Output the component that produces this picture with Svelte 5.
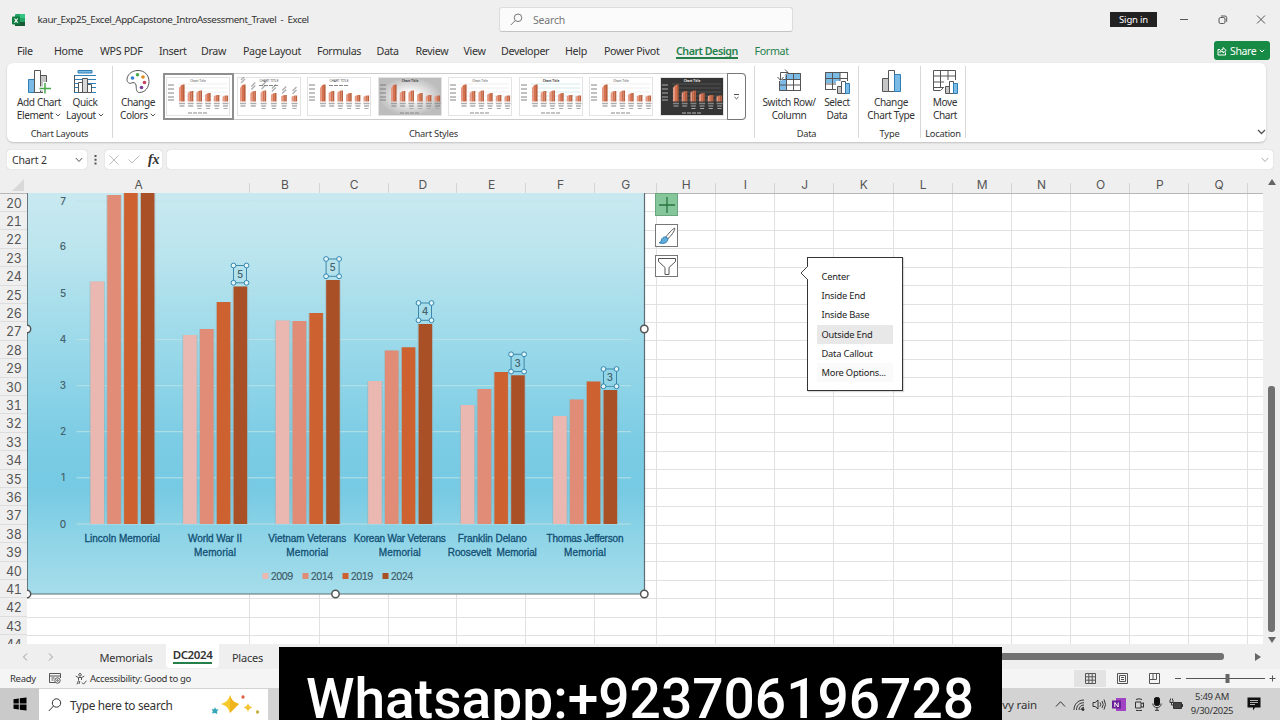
<script>
  const tabs = [
    { name: "File", width: 37 },
    { name: "Home", width: 46 },
    { name: "WPS PDF", width: 59 },
    { name: "Insert", width: 42 },
    { name: "Draw", width: 42 },
    { name: "Page Layout", width: 74 },
    { name: "Formulas", width: 59.5 },
    { name: "Data", width: 39 },
    { name: "Review", width: 48 },
    { name: "View", width: 37.5 },
    { name: "Developer", width: 64 },
    { name: "Help", width: 39 },
    { name: "Power Pivot", width: 72 },
    { name: "Chart Design", width: 78.5, green: true, active: true },
    { name: "Format", width: 40, green: true },
  ];

  const columns = [
    ["A", 223], ["B", 69.5], ["C", 69], ["D", 68.5], ["E", 69], ["F", 69],
    ["G", 61.5], ["H", 59], ["I", 59.5], ["J", 59], ["K", 59.5], ["L", 59],
    ["M", 59.3], ["N", 59.2], ["O", 59.2], ["P", 59.3], ["Q", 59],
  ];

  const rows = Array.from({ length: 25 }, (_, i) => 20 + i);

  const colors = ["#ebb8b1", "#e08c76", "#cd6130", "#aa5027"];
  const years = ["2009", "2014", "2019", "2024"];

  // x is the left edge of the first bar, tops are the bar tops
  const groups = [
    { x: 90.5, tops: [281.5, 195, 193, 193] },
    { x: 183.2, tops: [335, 329, 302, 286.5], label: "5" },
    { x: 275.8, tops: [320.5, 321, 313, 280], label: "5" },
    { x: 368.2, tops: [381, 350.5, 347.3, 324], label: "4" },
    { x: 460.8, tops: [405, 389, 372, 375.3], label: "3" },
    { x: 553.2, tops: [416, 399.5, 381.5, 390], label: "3" },
  ];

  const axis = [
    ["7", 201], ["6", 246.5], ["5", 293.5], ["4", 339.5],
    ["3", 385.7], ["2", 431.7], ["1", 477.8], ["0", 524],
  ];

  const categories = [
    { x: 122.3, lines: [["Lincoln Memorial", 75.5]] },
    { x: 215, lines: [["World War II", 54], ["Memorial", 42]] },
    { x: 307.3, lines: [["Vietnam Veterans", 78], ["Memorial", 42]] },
    { x: 399.8, lines: [["Korean War Veterans", 92], ["Memorial", 42]] },
    { x: 492.3, lines: [["Franklin Delano", 69], ["Roosevelt  Memorial", 89]] },
    { x: 585, lines: [["Thomas Jefferson", 77], ["Memorial", 42]] },
  ];

  const thumbs = [
    { kind: "plain" },
    { kind: "values" },
    { kind: "clean" },
    { kind: "grey" },
    { kind: "wide" },
    { kind: "teal" },
    { kind: "lined" },
    { kind: "dark" },
  ];
  const thumbBars = [17, 10.5, 11, 8.5, 6.5, 6];

  const options = [
    "Center",
    "Inside End",
    "Inside Base",
    "Outside End",
    "Data Callout",
    "More Options...",
  ];
</script>

{#snippet chevron()}
  <svg class="chev" width="6" height="4" viewBox="0 0 6 4"><path d="M.8.8 3 3 5.2.8" /></svg>
{/snippet}

{#snippet bars()}
  <path d="M3.5 9.5h6v13h-6z" fill="#c6c6c6" />
  <path d="M9.5 1.5h6v21h-6z" fill="#fff" />
  <path d="M15.5 5.5h6v17h-6z" fill="#7cbbe6" stroke="#2f7fb5" />
{/snippet}

<div class="window">
  <header class="titlebar">
    <svg class="logo" width="14" height="14" viewBox="0 0 14 14">
      <rect x="3" y="1" width="10" height="12" rx="1" fill="#21a366" />
      <path d="M8 1h5v4H8z" fill="#33c481" />
      <path d="M3 9h10v4H3z" fill="#185c37" />
      <rect x="0" y="3.5" width="8" height="8" rx="1" fill="#107c41" />
      <path d="M2.5 5.500 5.700 9.700M5.700 5.500 2.500 9.700" stroke="#fff" stroke-width="1.1" />
    </svg>
    <span class="filename">kaur_Exp25_Excel_AppCapstone_IntroAssessment_Travel&nbsp; -&nbsp; Excel</span>
    <div class="search">
      <svg width="13" height="13" viewBox="0 0 13 13"><circle cx="8" cy="4.8" r="3.8" /><path d="M5.3 7.5.8 12" /></svg>
      <span>Search</span>
    </div>
    <div class="spacer"></div>
    <div class="signin">Sign in</div>
    <div class="controls">
      <svg width="10" height="10" viewBox="0 0 10 10"><path d="M1 4.500h8" /></svg>
      <svg width="10" height="10" viewBox="0 0 10 10"><rect x="1" y="2.5" width="6" height="6" rx="1.5" /><path d="M3 1h4q1.700 0 1.700 1.700v4" /></svg>
      <svg width="10" height="10" viewBox="0 0 10 10"><path d="m1 .5 8 8M9 .5l-8 8" /></svg>
    </div>
  </header>

  <nav class="tabs">
    {#each tabs as tab}
      <div class="tab" class:green={tab.green} class:active={tab.active} style={`width: ${tab.width}px`}>
        <span>{tab.name}</span>
      </div>
    {/each}
    <div class="share">
      <svg width="10" height="10" viewBox="0 0 10 10"><path d="M3 3.500H1v5.500h7.500V6.500M2.800 6.500C3 4.500 4 3.500 6 3.500V1.500L9.200 4.500 6 7V5.200C4.600 5.200 3.600 5.600 2.800 6.500z" /></svg>
      <span>Share</span>
      {@render chevron()}
    </div>
  </nav>

  <section class="ribbon">
    <div class="group layouts">
      <div class="tools">
        <div class="tool w46">
          <svg width="24" height="25" viewBox="0 0 24 25">
            <path d="M1.500 10.500h6v13h-6z" fill="#7cbbe6" stroke="#2f7fb5" />
            <path d="M13.500 6.500h6v17h-6z" fill="#c6c6c6" />
            <path d="M7.500 1.500h6v22h-6z" fill="#fff" />
            <path d="M18 13v12M12 19.500h12" stroke="#fff" stroke-width="4" />
            <path d="M18 14v10.500M12.500 19.500H24" stroke="#4aa84e" stroke-width="1.5" />
          </svg>
          <span>Add Chart<br />Element {@render chevron()}</span>
        </div>
        <div class="tool w46">
          <svg width="24" height="25" viewBox="0 0 24 25">
            <path d="M5 1.500h14v2.500H5z" fill="#7cbbe6" stroke="#2f7fb5" />
            <path d="M1 6.500h22M1 10.500h22M1 14.500h22M1 18.500h22M1 23.500h22" stroke="#2f7fb5" />
            <path d="M1.500 6.500v17" />
            <path d="M5.500 13.500h4v10h-4z" fill="#fff" />
            <path d="M9.500 9.500h5v14h-5z" fill="#d8d8d8" />
            <path d="M14.500 15.500h4v8h-4z" fill="#fff" />
          </svg>
          <span>Quick<br />Layout {@render chevron()}</span>
        </div>
      </div>
      <div class="caption">Chart Layouts</div>
    </div>

    <div class="group styles">
      <div class="tools">
        <div class="tool w50">
          <svg width="24" height="25" viewBox="0 0 24 25">
            <path d="M12 1.500C5.500 1.500 1 6 1 10.500c0 3 2.500 4.500 4.500 3.500 2-.8 4-.5 4.500 2 .5 2.300-.3 7.500 3.500 7.500 5.500 0 9.500-5 9.500-11 0-6.500-4.500-11-11-11z" fill="#fff" />
            <g stroke="none">
              <circle cx="6.5" cy="9" r="1.8" fill="#2f7fd0" />
              <circle cx="11.5" cy="5.8" r="1.8" fill="#4aa84e" />
              <circle cx="17" cy="8" r="1.8" fill="#e08a1e" />
              <circle cx="18.5" cy="13.5" r="1.8" fill="#c8405a" />
              <circle cx="15.5" cy="18.5" r="1.8" fill="#7d3f98" />
            </g>
          </svg>
          <span>Change<br />Colors {@render chevron()}</span>
        </div>
        <div class="gallery">
          {#each thumbs as thumb, t}
            <div class="thumb" class:selected={t === 0}>
              <svg class={thumb.kind} width="64" height="39" viewBox="0 0 64 39">
                <defs>
                  <radialGradient id="shade"><stop offset="0.2" stop-color="#fff" /><stop offset="1" stop-color="#bdbdbd" /></radialGradient>
                </defs>
                <rect class="paper" x=".5" y=".5" width="63" height="38" />
                {#each [7, 11, 15, 19, 23] as y}
                  <path class="rule" d={`M12 ${y}H61`} />
                {/each}
                <text class="title" x="32" y="5">{thumb.kind === "values" || thumb.kind === "clean" ? "CHART TITLE" : "Chart Title"}</text>
                {#if thumb.kind !== "values"}
                  <path class="tick" d="M2 8h6M2 12h6M2 16h6M2 20h6M2 23h6" />
                {/if}
                {#each thumbBars as height, i}
                  {@const x = (thumb.kind === "values" ? 3 : 13) + i * (thumb.kind === "values" ? 10.3 : 8.7)}
                  <path fill="#e59a84" d={`M${x} 24.500v${-height * 0.8}l2-${height * 0.15}V24.500z`} />
                  <path fill="#d5714f" d={`M${x + 2} 24.500v${-height * 0.95}l2-${height * 0.05}V24.500z`} />
                  <path fill="#b9603e" d={`M${x + 4} 24.500v${-height}h1.600V24.500z`} />
                  {#if thumb.kind === "values"}
                    <path class="tick" d={`M${x + 1} ${23 - height}l4-4M${x + 1} ${20 - height}l4-4`} />
                  {/if}
                  <path class="tick" d={`M${x} 26.500h6M${x + 0.5} 29h5`} />
                  {#if i > 1}<path class="faint" d={`M${x + 1} 31.500h4`} />{/if}
                {/each}
                <path class="legend" d={thumb.kind === "values" || thumb.kind === "clean" ? "M22 8.500h20" : "M22 36h20"} />
              </svg>
            </div>
          {/each}
          <div class="more">
            <svg width="7" height="7" viewBox="0 0 7 7"><path d="M1 1.500h5M1.500 4 3.500 5.800 5.500 4" /></svg>
          </div>
        </div>
      </div>
      <div class="caption">Chart Styles</div>
    </div>

    <div class="group data">
      <div class="tools">
        <div class="tool w58">
          <svg width="26" height="25" viewBox="0 0 26 25">
            <path d="M3.500 4.500h21v17h-21z" fill="#fff" />
            <path d="M9 5h15v5H9zM4 10h6v11H4z" fill="#7cbbe6" stroke="none" />
            <path d="M3.500 21.500h21v-17h-21zM3.500 10.500h21M3.500 16h21M10.500 4.500v17M17.500 4.500v17" />
            <path d="M0 0h12v4L5 12H0z" fill="#fff" stroke="none" />
            <path d="M4.500 11V3.500H12M1.500 8l3 3.300 3-3.300M9 .5l3 3-3 3" />
          </svg>
          <span>Switch Row/<br />Column</span>
        </div>
        <div class="tool w38">
          <svg width="26" height="25" viewBox="0 0 26 25">
            <path d="M1.500 3.500h22v17h-22z" fill="#fff" />
            <path d="M2 4h14v10H2z" fill="#7cbbe6" stroke="none" />
            <path d="M1.500 20.500h22v-17h-22zM1.500 9.500h22M1.500 15h22M8.500 3.500v17M16 3.500v17" />
            <path d="M12 12h14v13H12z" fill="#fff" stroke="none" />
            <path d="M13.500 17.500h4v7h-4z" fill="#c6c6c6" /><path d="M17.500 12.500h4v12h-4z" fill="#fff" />
            <path d="M21.500 14.500h4v10h-4z" fill="#7cbbe6" stroke="#2f7fb5" />
          </svg>
          <span>Select<br />Data</span>
        </div>
      </div>
      <div class="caption">Data</div>
    </div>

    <div class="group type">
      <div class="tools">
        <div class="tool w58">
          <svg width="25" height="25" viewBox="0 0 25 25">{@render bars()}</svg>
          <span>Change<br />Chart Type</span>
        </div>
      </div>
      <div class="caption">Type</div>
    </div>

    <div class="group location">
      <div class="tools">
        <div class="tool w46">
          <svg width="26" height="25" viewBox="0 0 26 25">
            <path d="M1.500 1.500h22v17h-12l-3 3h-7zM1.500 7h22M1.500 13h22M1.500 18.500h10M8.500 1.500v17M16 1.500v17" fill="#fff" />
            <path d="M12 11h14v14H12z" fill="#fff" stroke="none" />
            <path d="M13.500 17.500h4v7h-4z" fill="#c6c6c6" /><path d="M17.500 12.500h4v12h-4z" fill="#fff" />
            <path d="M21.500 14.500h4v10h-4z" fill="#7cbbe6" stroke="#2f7fb5" />
          </svg>
          <span>Move<br />Chart</span>
        </div>
      </div>
      <div class="caption">Location</div>
    </div>
    <svg class="collapse" width="9" height="6" viewBox="0 0 9 6"><path d="m1 1 3.500 3.500L8 1" /></svg>
  </section>

  <section class="formula">
    <div class="namebox">
      <span>Chart 2</span>
      <svg width="8" height="6" viewBox="0 0 8 6"><path d="m.8 1 3.200 3.500L7.200 1" /></svg>
    </div>
    <svg class="dots" width="3" height="10" viewBox="0 0 3 10"><path d="M.5 0h2v2h-2zM.5 3.700h2v2h-2zM.5 7.400h2v2h-2z" /></svg>
    <div class="entry">
      <svg width="10" height="10" viewBox="0 0 10 10"><path d="m.5.5 9 9M9.500.5l-9 9" /></svg>
      <svg width="12" height="9" viewBox="0 0 12 9"><path d="M.5 4.500 4 8 11.500.5" /></svg>
      <i>fx</i>
    </div>
    <div class="input">
      <svg width="8" height="6" viewBox="0 0 8 6"><path d="m.8 1 3.200 3.500L7.200 1" /></svg>
    </div>
  </section>

  <main class="sheet">
    <div class="colhead">
      <div class="corner"><svg width="12" height="12" viewBox="0 0 12 12"><path d="M12 0v12H0z" /></svg></div>
      {#each columns as [name, width]}
        <div class="col" style={`width: ${width}px`}>{name}</div>
      {/each}
    </div>
    <div class="grid">
      <div class="rowhead">
        {#each rows as row}
          <div class="row">{row}</div>
        {/each}
      </div>
      <div class="cells">
        {#each columns as [, width]}
          <div class="cellcol" style={`width: ${width}px`}></div>
        {/each}
      </div>
    </div>

    <svg class="chart" width="622" height="407" viewBox="27 193 622 407">
      <defs>
        <linearGradient id="sky" x1="0" y1="0" x2="0" y2="1">
          <stop offset="0" stop-color="#c9e9f0" />
          <stop offset="0.14" stop-color="#bce5ee" />
          <stop offset="0.36" stop-color="#9ddaea" />
          <stop offset="0.62" stop-color="#7bcce4" />
          <stop offset="0.74" stop-color="#76cae3" />
          <stop offset="0.86" stop-color="#8ed4e7" />
          <stop offset="1" stop-color="#a6ddeb" />
        </linearGradient>
      </defs>
      <rect x="27" y="193" width="617.5" height="401" fill="url(#sky)" />
      {#each axis as [value, y]}
        <path class="gridline" class:dim={y < 320} d={`M76.500 ${y}H631`} />
        <text class="value" x="63" y={y + 3.5}>{value}</text>
      {/each}
      {#each groups as group}
        {#each group.tops as top, i}
          <rect x={group.x + i * 16.8 - 1} y={top} width="15.5" height={524 - top} fill="#9ba9aa" opacity="0.45" />
          <rect x={group.x + i * 16.8} y={top} width="13.5" height={524 - top} fill={colors[i]} />
        {/each}
        {#if group.label}
          {@const left = group.x + 50.3}
          {@const top = group.tops[3] - 21}
          <rect class="frame" x={left} y={top} width="13" height="17.3" />
          <text class="point" x={left + 6.5} y={top + 12.2}>{group.label}</text>
          {#each [[0, 0], [13, 0], [0, 17.3], [13, 17.3]] as [dx, dy]}
            <circle class="handle" cx={left + dx} cy={top + dy} r="2.4" />
          {/each}
        {/if}
      {/each}
      {#each categories as category}
        {#each category.lines as [text, width], i}
          <text class="category" x={category.x} y={542 + i * 13.7} textLength={width}>{text}</text>
        {/each}
      {/each}
      {#each years as year, i}
        <rect x={262.5 + i * 40} y="573" width="6" height="6" fill={colors[i]} />
        <text class="year" x={270.5 + i * 40} y="579.5" textLength="23">{year}</text>
      {/each}
      <path class="edge" d="M27 594H644.500V193M27.300 193V594" />
      <g class="grip">
        <circle cx="27" cy="329" r="3.7" /><circle cx="644.3" cy="329" r="3.7" />
        <circle cx="27" cy="594" r="3.7" /><circle cx="335.5" cy="594" r="3.7" /><circle cx="644.3" cy="594" r="3.7" />
      </g>
    </svg>

    <div class="flyouts">
      <div class="fly plus"><svg width="22" height="22" viewBox="0 0 22 22"><path d="M11 3v16M3 11h16" stroke="#28763f" stroke-width="1.3" /></svg></div>
      <div class="fly">
        <svg width="22" height="22" viewBox="0 0 22 22">
          <path d="M18.800 3.200c-2 .5-7 6-8.800 8.600l1.900 1.900C14.500 11.500 19 6 18.800 3.200z" fill="#fff" stroke="#555" />
          <path d="M10 12c-2.500-.3-4 .8-4.500 3-.3 1.500-1.200 2.300-2.500 2.700 3.500 1.500 8.500.8 9-3.800z" fill="#62acd9" stroke="#2f7fb5" />
        </svg>
      </div>
      <div class="fly"><svg width="22" height="22" viewBox="0 0 22 22"><path d="M2.500 3.500h17v3l-6.500 6v7H9v-7l-6.500-6z" fill="#fff" stroke="#555" /></svg></div>
    </div>

    <div class="menu">
      <svg class="beak" width="8" height="14" viewBox="0 0 8 14"><path d="M8 0 1 7l7 7" /></svg>
      {#each options as option}
        <div class="option" class:hover={option === "Outside End"} class:last={option === "More Options..."}>{option}</div>
      {/each}
    </div>

    <div class="vscroll">
      <svg width="8" height="6" viewBox="0 0 8 6"><path d="M4 0 8 6H0z" /></svg>
      <div class="thumbv"></div>
      <svg width="8" height="6" viewBox="0 0 8 6"><path d="M0 0h8L4 6z" /></svg>
    </div>
  </main>

  <section class="sheets">
    <svg width="6" height="8" viewBox="0 0 6 8"><path d="M5 .5 1.500 4 5 7.500" /></svg>
    <svg class="next" width="6" height="8" viewBox="0 0 6 8"><path d="M1 .5 4.500 4 1 7.500" /></svg>
    <div class="sheettab first">Memorials</div>
    <div class="sheettab current"><span>DC2024</span></div>
    <div class="sheettab places">Places</div>
    <div class="hscroll"></div>
    <svg class="right" width="6" height="8" viewBox="0 0 6 8"><path d="M0 0 6 4 0 8z" /></svg>
  </section>

  <footer class="status">
    <span class="ready">Ready</span>
    <svg class="macro" width="12" height="11" viewBox="0 0 12 11"><path d="M6 9.500H.5v-9h11V5M.5 3h11M2.500 5h3M2.500 7h2" /><circle cx="8.5" cy="7.5" r="2.7" /><circle cx="8.5" cy="7.5" r=".8" /></svg>
    <svg class="access" width="12" height="12" viewBox="0 0 12 12"><circle cx="5" cy="1.8" r="1.3" /><path d="M.8 3.200 3.500 4.500v3L2 11.300M9.300 3.200 6.500 4.500v2.500M3.500 4.500h3M4.800 8 4 11M7 9.500l1.500 1.700 3-3.500" /></svg>
    <span class="good">Accessibility: Good to go</span>
    <div class="spacer"></div>
    <div class="view on"><svg width="11" height="11" viewBox="0 0 11 11"><path d="M.5.5h10v10H.5zM3.800.5v10M7.200.5v10M.5 3.800h10M.5 7.200h10" /></svg></div>
    <div class="view"><svg width="11" height="11" viewBox="0 0 11 11"><path d="M.5.5h10v10H.5zM2.500 2.500h6v6h-6zM4 4.500h3M4 6.500h3" /></svg></div>
    <div class="view"><svg width="11" height="11" viewBox="0 0 11 11"><path d="M.5.5h10v10H.5zM.5 6.500h7v-6M4 .5v6" /></svg></div>
    <svg class="zoom" width="104" height="11" viewBox="0 0 104 11">
      <path d="M2 5.500h6M96.500 5.500h6M99.500 2.500v6" />
      <path class="track" d="M13 5.500h79" />
      <path class="knob" d="M52.500 1h4v9h-4z" />
    </svg>
  </footer>

  <footer class="taskbar">
    <div class="start"><svg width="14" height="14" viewBox="0 0 14 14"><path d="M.5 2.300 5.800 1.500v5H.5zM6.800 1.300 13.500.4v6.100H6.800zM.5 7.500h5.300v5L.5 11.700zM6.800 7.500h6.700v6.100l-6.700-.9z" /></svg></div>
    <div class="find">
      <svg class="lens" width="14" height="14" viewBox="0 0 14 14"><circle cx="8.5" cy="5" r="4.2" /><path d="M5.500 8 .8 13" /></svg>
      <span>Type here to search</span>
      <svg class="sparkles" width="50" height="21" viewBox="0 0 50 21">
        <path d="M19 1c1.500 5 3.500 7.200 9 9-5.500 1.700-7.500 4-9 9-1.500-5-3.500-7.300-9-9 5.500-1.800 7.500-4 9-9z" fill="#f6c92d" />
        <path d="M19 1c1.500 5 3.500 7.200 9 9L19 19z" fill="#f1b51c" />
        <path d="M37 9c.8 2.500 1.800 3.700 4.500 4.500-2.700.8-3.700 2-4.500 4.500-.8-2.500-1.800-3.700-4.500-4.500C35.200 12.700 36.200 11.500 37 9z" fill="#f3c535" />
        <path d="m4 13 1 2.300 2.500.3L6 17.500l.3 2.500-2.500-1L1 19.500l.8-2.300L.8 15l2.300.2z" fill="#35a6b8" />
        <circle cx="32" cy="3" r="1.7" fill="#df6449" /><circle cx="46.5" cy="18" r="1.7" fill="#c9b13b" />
      </svg>
    </div>
    <div class="spacer"></div>
    <span class="weather">Heavy rain</span>
    <div class="tray">
      <svg width="11" height="13" viewBox="0 0 11 13"><path d="m1 8.500 4.500-4.800L10 8.500" /></svg>
      <svg width="12" height="13" viewBox="0 0 12 13"><path d="M1 12C1 6 5 2 11 2M3.500 12C3.500 7.500 6.500 4.700 11 4.700M6 12c0-3 2-5 5-5M8 12c0-1.500 1-2.700 3-2.700" /><circle cx="10" cy="11.5" r="1" fill="#222" /></svg>
      <svg width="14" height="13" viewBox="0 0 14 13"><path d="M1 4.500h2.200L6 2v9L3.200 8.500H1zM8 4.500q1.500 2 0 4M10 3q2.500 3.500 0 7M12 1.500q3 5 0 10" /></svg>
      <svg width="14" height="13" viewBox="0 0 14 13"><path d="M4 0h10v13H4z" fill="#a044c4" stroke="none" /><path d="M0 2.500h9v8H0z" fill="#6b1f96" stroke="none" /><path class="mark" d="M2.800 9V4.500L6.200 9V4.500" /></svg>
      <svg width="12" height="13" viewBox="0 0 12 13"><path d="M2.500 4h5.500v6H2.500zM8 6l2.500-1.200v4.500L8 8.500M3 1.500q3-1.500 6 0M3 12.300q3 .8 6 0" /></svg>
      <svg width="10" height="14" viewBox="0 0 10 14"><rect x="2.5" y=".5" width="5" height="8" rx="1.8" fill="#111" stroke="#111" /><path d="M.8 6.500C.8 12 9.200 12 9.200 6.500M5 10.800v2.500M3 13.300h4" /></svg>
      <svg width="14" height="12" viewBox="0 0 14 12"><path d="M4.500 4.500h8v6h-8z" fill="#444" /><path d="M13.500 6v3M1 2v2.500h3V2M2.500 4.500V7h2M1.500.5v1.500M3.500.5v1.500" /></svg>
    </div>
    <div class="clock"><span>5:49 AM</span><span>9/30/2025</span></div>
    <svg class="notice" width="14" height="14" viewBox="0 0 14 14"><path d="M.5.5h13v10H8L6 13.500v-3H.5z" /><path d="M3 3.500h8M3 5.500h8M3 7.500h5" stroke="#ddd" stroke-width=".8" /></svg>
  </footer>

  <div class="banner">Whatsapp:+923706196728</div>
</div>

<style>
  :global(body) {
    margin: 0;
    overflow: hidden;
    background: #efefef;
  }

  .window {
    position: relative;
    display: flex;
    flex-direction: column;
    width: 1280px;
    height: 720px;
    overflow: hidden;
    background: #efefef;
    color: #333;
    font-family: "Noto Sans", "Open Sans", sans-serif;
    font-size: 11px;
    letter-spacing: -0.2px;
    white-space: nowrap;
  }

  svg {
    display: block;
    flex: none;
    fill: none;
    stroke: #555;
    stroke-width: 1;
  }

  .spacer {
    flex: 1;
  }

  .titlebar {
    display: flex;
    align-items: center;
    height: 39px;
    flex: none;
    padding-left: 12px;
    box-sizing: border-box;
  }

  .logo {
    stroke: none;
  }

  .filename {
    width: 461.5px;
    margin-left: 11.5px;
    font-size: 9.8px;
    letter-spacing: -0.42px;
  }

  .search {
    display: flex;
    align-items: center;
    gap: 10px;
    width: 294px;
    height: 25px;
    padding-left: 10px;
    box-sizing: border-box;
    background: #fbfbfb;
    border: 1px solid #dcdcdc;
    border-bottom-color: #c4c4c4;
    border-radius: 3px;
    color: #777;
    font-size: 10.5px;
  }

  .search svg {
    stroke: #777;
  }

  .signin {
    width: 47px;
    height: 15px;
    margin-right: 22px;
    background: #222;
    color: #fff;
    font-size: 9.5px;
    line-height: 16px;
    text-align: center;
  }

  .controls {
    display: flex;
    gap: 28.5px;
    margin-right: 14px;
  }

  .tabs {
    display: flex;
    height: 24px;
    flex: none;
    padding-left: 17px;
    font-size: 10.7px;
    letter-spacing: -0.35px;
  }

  .tab {
    flex: none;
    height: 21px;
    line-height: 24.5px;
  }

  .tab span {
    display: inline-block;
    height: 18px;
  }

  .green {
    color: #257f4b;
  }

  .active {
    font-weight: 600;
    letter-spacing: -0.48px;
  }

  .active span {
    border-bottom: 2px solid #257f4b;
  }

  .share {
    display: flex;
    align-items: center;
    gap: 3px;
    width: 56px;
    height: 19px;
    margin-top: 2px;
    margin-left: auto;
    margin-right: 10px;
    padding-left: 3px;
    box-sizing: border-box;
    background: #178a45;
    border-radius: 3px;
    color: #fff;
    font-size: 10.5px;
  }

  .share svg {
    stroke: #fff;
  }

  .ribbon {
    display: flex;
    width: 1259px;
    height: 79px;
    margin-left: 7px;
    flex: none;
    background: #fff;
    border-radius: 6px;
    box-shadow: 0 1px 2px rgba(0, 0, 0, 0.2);
  }

  .group {
    display: flex;
    flex-direction: column;
    height: 72px;
    margin-top: 3px;
    box-sizing: border-box;
    border-right: 1px solid #d8d8d8;
  }

  .layouts {
    width: 106px;
  }

  .styles {
    width: 642px;
  }

  .data {
    width: 104px;
  }

  .type {
    width: 62px;
  }

  .location {
    width: 45px;
  }

  .tools {
    display: flex;
    flex: none;
    height: 61px;
  }

  .layouts .tools {
    padding-left: 9px;
  }

  .data .tools {
    padding-left: 5px;
  }

  .type .tools {
    padding-left: 3px;
  }

  .location .tools {
    padding-left: 1px;
  }

  .tool {
    display: flex;
    flex: none;
    flex-direction: column;
    align-items: center;
    padding-top: 3px;
    font-size: 10.1px;
    line-height: 13px;
    letter-spacing: -0.38px;
    text-align: center;
  }

  .tool > span {
    margin-top: 2px;
  }

  .w38 {
    width: 38px;
  }

  .w46 {
    width: 46px;
  }

  .w50 {
    width: 50px;
  }

  .w58 {
    width: 58px;
  }

  .chev {
    display: inline-block;
    vertical-align: 2px;
  }

  .caption {
    flex: none;
    font-size: 9.3px;
    line-height: 14px;
    letter-spacing: -0.22px;
    text-align: center;
  }

  .gallery {
    display: flex;
    width: 583px;
    height: 47px;
    margin-top: 6.5px;
    box-sizing: border-box;
    border: 1px solid #ccc;
    border-radius: 3px;
  }

  .thumb {
    flex: none;
    width: 70.5px;
    height: 47px;
    margin: -1px 0 0 -1px;
    padding: 4px 3px;
    box-sizing: border-box;
  }

  .thumb + .thumb {
    margin-left: 0;
  }

  .selected {
    border: 2px solid #8f8f8f;
    padding: 2px 1px;
  }

  .thumb svg {
    stroke: none;
  }

  .paper {
    fill: #fff;
    stroke: #e3e3e3;
  }

  .grey .paper {
    fill: url(#shade);
  }

  .dark .paper {
    fill: #353535;
  }

  .rule {
    stroke: #e4e4e4;
    stroke-width: 0.6;
  }

  .teal .rule {
    stroke: #b9dede;
  }

  .dark .rule {
    stroke: #666;
  }

  .clean .rule,
  .values .rule,
  .grey .rule {
    stroke: none;
  }

  .title {
    fill: #444;
    font-size: 3.2px;
    letter-spacing: 0;
    text-anchor: middle;
  }

  .grey .title,
  .teal .title,
  .dark .title {
    font-weight: 700;
  }

  .tick {
    stroke: #777;
    stroke-width: 1.3;
    opacity: 0.6;
  }

  .faint {
    stroke: #aaa;
    stroke-width: 1;
  }

  .legend {
    stroke: #888;
    stroke-width: 1;
    stroke-dasharray: 4 1;
  }

  .dark .tick,
  .dark .legend {
    stroke: #bbb;
  }

  .dark .title {
    fill: #eee;
  }

  .more {
    display: flex;
    align-items: center;
    justify-content: center;
    width: 20px;
    height: 47px;
    margin: -1px -1px 0 auto;
    box-sizing: border-box;
    border: 1px solid #777;
    border-radius: 0 4px 4px 0;
  }

  .collapse {
    margin: 66px 0 0 auto;
    stroke-width: 1.3;
  }

  .formula {
    display: flex;
    align-items: center;
    height: 19px;
    margin-top: 8px;
    padding-left: 7px;
    flex: none;
  }

  .namebox,
  .entry,
  .input {
    display: flex;
    align-items: center;
    height: 19px;
    box-sizing: border-box;
    background: #fff;
    border-radius: 3px;
    box-shadow: 0 0 1px rgba(0, 0, 0, 0.3);
  }

  .namebox {
    justify-content: space-between;
    width: 80px;
    padding: 0 4px 0 5px;
    font-size: 10.5px;
    letter-spacing: -0.15px;
  }

  .dots {
    margin: 0 8px 0 7px;
    fill: #555;
    stroke: none;
  }

  .entry {
    width: 57px;
    gap: 9px;
    padding-left: 4px;
  }

  .entry svg {
    stroke: #bbb;
  }

  .entry i {
    margin-left: -1px;
    font-family: "Liberation Serif", serif;
    font-size: 14px;
    font-weight: bold;
  }

  .input {
    justify-content: flex-end;
    width: 1106px;
    margin-left: 5px;
    padding-right: 4px;
  }

  .input svg {
    stroke: #aaa;
  }

  .sheet {
    position: relative;
    height: 475px;
    flex: none;
  }

  .colhead {
    display: flex;
    width: 1263px;
    height: 24.5px;
    box-sizing: border-box;
    border-bottom: 1px solid #b7b7b7;
    font-family: Inter, "Liberation Sans", sans-serif;
    font-size: 12px;
    color: #555;
  }

  .corner {
    width: 27px;
    flex: none;
    padding: 10px 0 0 12px;
    box-sizing: border-box;
  }

  .corner svg {
    fill: #d9d9d9;
    stroke: none;
  }

  .col {
    flex: none;
    line-height: 31px;
    text-align: center;
    box-sizing: border-box;
    background: linear-gradient(#d4d4d4, #d4d4d4) right bottom / 1px 10px no-repeat;
  }

  .grid {
    display: flex;
    width: 1263px;
    height: 450.5px;
    overflow: hidden;
  }

  .rowhead {
    width: 27px;
    flex: none;
    font-family: Inter, "Liberation Sans", sans-serif;
    font-size: 12.5px;
    font-variant-numeric: tabular-nums;
    letter-spacing: -0.4px;
    color: #555;
  }

  .row {
    height: 18.42px;
    padding-right: 5.5px;
    box-sizing: border-box;
    border-bottom: 1px solid #ddd;
    line-height: 20.5px;
    text-align: right;
  }

  .cells {
    display: flex;
    flex: 1;
    background: repeating-linear-gradient(#fff 0 17.42px, #e1e1e1 17.42px 18.42px);
  }

  .cellcol {
    flex: none;
    box-sizing: border-box;
    border-right: 1px solid #e1e1e1;
  }

  .chart {
    position: absolute;
    top: 24px;
    left: 27px;
    stroke: none;
    font-family: Inter, "Liberation Sans", sans-serif;
    letter-spacing: 0;
  }

  .gridline {
    stroke: #b9e0e4;
    stroke-width: 1;
  }

  .dim {
    opacity: 0.5;
  }

  .value,
  .point {
    fill: #45636c;
    font-size: 10px;
    font-weight: 500;
    text-anchor: middle;
  }

  .frame {
    stroke: #3f87a8;
  }

  .handle {
    fill: #e4f5fa;
    stroke: #2f86b0;
  }

  .category {
    fill: #124f73;
    font-family: "Liberation Sans", sans-serif;
    font-size: 10px;
    stroke: #124f73;
    stroke-width: 0.3;
    text-anchor: middle;
    white-space: pre;
  }

  .year {
    fill: #45636c;
    font-size: 10px;
    font-weight: 500;
    font-variant-numeric: tabular-nums;
  }

  .edge {
    stroke: #5c6e73;
    stroke-width: 1.2;
  }

  .grip {
    fill: #fff;
    stroke: #555;
    stroke-width: 1.5;
  }

  .flyouts {
    position: absolute;
    top: 24px;
    left: 655px;
    display: flex;
    flex-direction: column;
    gap: 8px;
  }

  .fly {
    width: 23px;
    height: 22.5px;
    box-sizing: border-box;
    background: #fff;
    border: 1px solid #777;
  }

  .fly svg {
    margin: -0.5px;
  }

  .plus {
    background: #86c69b;
    border-color: #6aa57d;
    margin-bottom: 0.5px;
  }

  .menu {
    position: absolute;
    top: 87.5px;
    left: 807px;
    width: 95.5px;
    height: 134px;
    padding: 9.5px 9px;
    box-sizing: border-box;
    background: #fff;
    border: 1px solid #333;
    box-shadow: 1px 1px 1px rgba(0, 0, 0, 0.15);
    font-size: 9.3px;
    letter-spacing: -0.2px;
  }

  .beak {
    position: absolute;
    top: 8px;
    left: -8px;
    fill: #fff;
    stroke: #444;
  }

  .option {
    height: 19.2px;
    padding-left: 4.5px;
    line-height: 19.6px;
    color: #222;
  }

  .hover {
    background: #e8e8e8;
  }

  .last {
    background: #fafafa;
  }

  .vscroll {
    position: absolute;
    top: 10px;
    right: 4px;
    display: flex;
    flex-direction: column;
    align-items: center;
    width: 9px;
    height: 464px;
  }

  .vscroll svg,
  .right {
    fill: #666;
    stroke: none;
  }

  .thumbv {
    width: 7px;
    height: 247px;
    margin: 201px 0 5px;
    background: #717171;
    border-radius: 3px;
  }

  .sheets {
    display: flex;
    align-items: center;
    height: 25px;
    padding-left: 22px;
    flex: none;
    background: #efefef;
    font-size: 11px;
  }

  .sheets > svg {
    stroke: #999;
  }

  .next {
    margin-left: 20px;
  }

  .sheettab {
    height: 25px;
    box-sizing: border-box;
    line-height: 27px;
    text-align: center;
  }

  .first {
    width: 80px;
    margin-left: 32px;
  }

  .current {
    width: 53px;
    height: 24px;
    margin-bottom: 1px;
    background: #fff;
    border-radius: 0 0 4px 4px;
    line-height: 22px;
    font-size: 11.5px;
    font-weight: 600;
    letter-spacing: -0.4px;
  }

  .current span {
    display: inline-block;
    height: 20px;
    box-sizing: border-box;
    border-bottom: 2px solid #257f4b;
  }

  .places {
    width: 57px;
  }

  .hscroll {
    width: 224px;
    height: 7px;
    margin-left: 724px;
    background: #717171;
    border-radius: 3px;
  }

  .sheets > .right {
    margin-left: 31px;
    stroke: none;
  }

  .status {
    display: flex;
    align-items: center;
    height: 19px;
    padding-left: 10px;
    flex: none;
    background: #f5f5f5;
    font-size: 9.5px;
    letter-spacing: -0.3px;
  }

  .ready {
    width: 39px;
  }

  .access {
    margin: 0 3px 0 14px;
  }

  .view {
    display: flex;
    align-items: center;
    justify-content: center;
    width: 32px;
    height: 17px;
  }

  .on {
    background: #e3e3e3;
  }

  .zoom {
    margin-left: 3px;
    margin-right: 3px;
  }

  .knob {
    fill: #666;
    stroke: none;
  }

  .taskbar {
    display: flex;
    align-items: center;
    height: 32px;
    flex: none;
    background: #d3d3d3;
  }

  .start {
    display: flex;
    align-items: center;
    justify-content: center;
    width: 39px;
    height: 32px;
    background: #cacaca;
  }

  .start svg {
    fill: #000;
    stroke: none;
  }

  .find {
    display: flex;
    align-items: center;
    width: 229px;
    height: 31px;
    margin-top: 1px;
    background: #fff;
    font-size: 11.8px;
    letter-spacing: -0.32px;
  }

  .lens {
    margin-left: 9px;
    stroke: #333;
  }

  .find span {
    width: 132px;
    margin-left: 8px;
  }

  .sparkles {
    margin-left: 9px;
    stroke: none;
  }

  .weather {
    margin-right: 18px;
    font-size: 11.5px;
    letter-spacing: -0.15px;
  }

  .tray {
    display: flex;
    align-items: center;
    justify-content: space-between;
    width: 128px;
  }

  .tray svg {
    stroke: #333;
  }

  .tray .mark {
    stroke: #fff;
  }

  .clock {
    display: flex;
    flex-direction: column;
    align-items: center;
    width: 44px;
    margin-left: 7px;
    font-size: 9.5px;
    line-height: 14px;
    letter-spacing: -0.3px;
  }

  .notice {
    margin: 0 19px 0 13px;
    fill: #111;
    stroke: none;
  }

  .banner {
    position: absolute;
    left: 279px;
    top: 647px;
    width: 722.5px;
    height: 73px;
    padding-left: 27px;
    box-sizing: border-box;
    overflow: hidden;
    background: #000;
    color: #fff;
    font-family: Roboto, sans-serif;
    font-size: 55.1px;
    font-weight: 500;
    line-height: 104px;
    letter-spacing: 0;
  }
</style>
